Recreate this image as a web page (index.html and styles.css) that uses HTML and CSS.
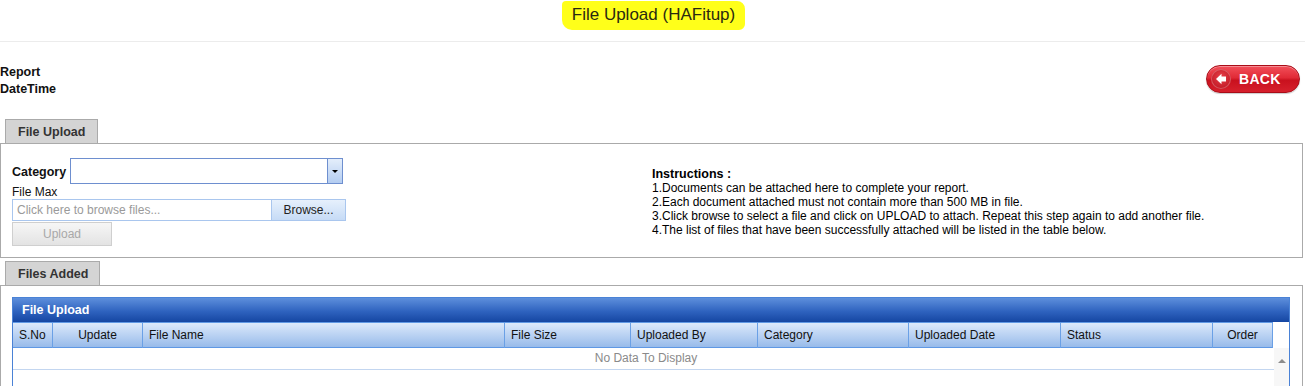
FILE: index.html
```html
<!DOCTYPE html>
<html>
<head>
<meta charset="utf-8">
<title>File Upload (HAFitup)</title>
<link rel="stylesheet" href="styles.css">
</head>
<body>
<header class="page-head">
  <span class="title-mark">File Upload (HAFitup)</span>
</header>

<section class="meta">
  <div class="meta-labels">
    <div>Report</div>
    <div>DateTime</div>
  </div>
  <button class="back-btn" type="button">
    <span class="back-circle">
      <svg width="14" height="14" viewBox="0 0 14 14"><path d="M2 7 L7.5 1.8 L7.5 4.6 L12 4.6 L12 9.4 L7.5 9.4 L7.5 12.2 Z" fill="#fff"/></svg>
    </span>
    <span class="back-text">BACK</span>
  </button>
</section>

<div class="tab tab-first">File Upload</div>
<section class="panel panel-upload">
  <div class="form-col">
    <div class="cat-row">
      <label class="cat-label">Category</label>
      <div class="select">
        <div class="select-field"></div>
        <div class="select-btn"><span class="caret"></span></div>
      </div>
    </div>
    <div class="file-max">File Max</div>
    <div class="file-row">
      <div class="file-field">Click here to browse files...</div>
      <div class="browse-btn">Browse...</div>
    </div>
    <div class="upload-btn">Upload</div>
  </div>
  <div class="instructions">
    <div class="ins-title">Instructions :</div>
    <div>1.Documents can be attached here to complete your report.</div>
    <div>2.Each document attached must not contain more than 500 MB in file.</div>
    <div>3.Click browse to select a file and click on UPLOAD to attach. Repeat this step again to add another file.</div>
    <div>4.The list of files that have been successfully attached will be listed in the table below.</div>
  </div>
</section>

<div class="tab tab-second">Files Added</div>
<section class="panel panel-files">
  <div class="grid">
    <div class="grid-caption">File Upload</div>
    <div class="grid-head-row">
      <div class="grid-head">
        <div class="hc c-left">S.No</div>
        <div class="hc c-center">Update</div>
        <div class="hc c-left">File Name</div>
        <div class="hc c-left">File Size</div>
        <div class="hc c-left">Uploaded By</div>
        <div class="hc c-left">Category</div>
        <div class="hc c-left">Uploaded Date</div>
        <div class="hc c-left">Status</div>
        <div class="hc c-center">Order</div>
      </div>
    </div>
    <div class="grid-body">
      <div class="rows">
        <div class="empty-row">No Data To Display</div>
      </div>
      <div class="vscroll"><span class="up-arrow"></span></div>
    </div>
  </div>
</section>
</body>
</html>
```

FILE: styles.css
```css
html, body {
  margin: 0;
  padding: 0;
  background: #fff;
}
body {
  font-family: "Liberation Sans", Arial, sans-serif;
  font-size: 12px;
  color: #111;
  overflow: hidden;
}

.page-head {
  border-bottom: 1px solid #ececec;
  display: flex;
  justify-content: center;
  align-items: flex-start;
  padding-top: 1px;
  box-sizing: border-box;
  height: 42px;
}
.title-mark {
  background: #ffff1a;
  color: #2a2a10;
  font-size: 17px;
  line-height: 20px;
  padding: 4px 10px 5px 10px;
  border-radius: 4px 8px 6px 10px;
  margin-left: 2px;
}

.meta {
  display: flex;
  justify-content: space-between;
  align-items: flex-start;
  padding: 22px 5px 0 0;
  box-sizing: border-box;
  height: 77px;
}
.meta-labels {
  font-weight: bold;
  font-size: 12.5px;
  line-height: 17px;
}
.back-btn {
  margin-top: 1px;
  width: 94px;
  height: 28px;
  border: 1px solid #a90d18;
  border-radius: 14px;
  background: linear-gradient(#f2505a 0%, #e12a36 45%, #c9111e 55%, #d6202c 100%);
  box-shadow: inset 0 1px 0 rgba(255,255,255,0.35), 0 1px 1px rgba(0,0,0,0.2);
  display: flex;
  align-items: center;
  padding: 0 0 0 4px;
  gap: 8px;
  cursor: pointer;
}
.back-circle {
  width: 20px;
  height: 20px;
  border-radius: 50%;
  background: radial-gradient(circle at 50% 40%, #e8404a, #b50d19);
  box-shadow: inset 0 0 0 1px rgba(255,255,255,0.25);
  display: flex;
  align-items: center;
  justify-content: center;
}
.back-text {
  color: #fff;
  font-family: "Liberation Sans", Arial, sans-serif;
  font-weight: bold;
  font-size: 14px;
  letter-spacing: 0.3px;
}

.tab {
  display: inline-block;
  margin-left: 5px;
  background: #d4d4d4;
  border: 1px solid #aaa;
  border-bottom: none;
  font-weight: bold;
  font-size: 12.5px;
  color: #333;
  height: 24px;
  line-height: 24px;
  box-sizing: border-box;
  padding: 0 0 0 12px;
  vertical-align: bottom;
}
.tab-first { width: 93px; }
.tab-second { width: 95px; margin-top: 3px; }

.panel {
  border: 1px solid #aaa;
  margin-right: 2px;
  box-sizing: border-box;
}
.panel-upload {
  height: 115px;
  display: flex;
  padding: 14px 0 0 11px;
}
.form-col {
  width: 640px;
}
.cat-row {
  display: flex;
  align-items: center;
  height: 26px;
}
.cat-label {
  width: 58px;
  font-weight: bold;
  font-size: 12.5px;
  padding-top: 2px;
}
.select {
  display: flex;
  width: 273px;
  height: 26px;
  border: 1px solid #6e8fcf;
  box-sizing: border-box;
}
.select-field {
  flex: 1;
  background: #fff;
}
.select-btn {
  width: 14px;
  border-left: 1px solid #6e8fcf;
  background: linear-gradient(#e4eefb, #b4cdf1);
  display: flex;
  align-items: center;
  justify-content: center;
}
.caret {
  width: 0;
  height: 0;
  border-left: 3px solid transparent;
  border-right: 3px solid transparent;
  border-top: 3px solid #000;
}
.file-max {
  line-height: 14px;
  height: 14px;
  padding-top: 1px;
}
.file-row {
  display: flex;
  height: 22px;
  width: 334px;
}
.file-field {
  width: 260px;
  border: 1px solid #a9c6ee;
  box-sizing: border-box;
  color: #9a9a9a;
  padding-left: 4px;
  line-height: 21px;
}
.browse-btn {
  flex: 1;
  border: 1px solid #a9c6ee;
  border-left: none;
  background: linear-gradient(#e6f0fc, #c6dbf6);
  text-align: center;
  line-height: 21px;
  color: #222;
}
.upload-btn {
  margin-top: 1px;
  width: 100px;
  height: 24px;
  box-sizing: border-box;
  border: 1px solid #cfcfcf;
  background: linear-gradient(#f6f6f6, #e3e3e3);
  color: #a8a8a8;
  text-align: center;
  line-height: 23px;
}
.instructions {
  margin-top: 9px;
  line-height: 14px;
  color: #000;
}
.ins-title {
  font-weight: bold;
  font-size: 12.5px;
}

.panel-files {
  height: 102px;
  padding: 11px 12px 0 11px;
}
.grid {
  border: 1px solid #4a82d6;
  border-bottom: none;
  height: 100%;
  box-sizing: border-box;
  display: flex;
  flex-direction: column;
}
.grid-caption {
  height: 24px;
  line-height: 25px;
  background: linear-gradient(#5d8fdc 0%, #2f63bf 55%, #1546a2 100%);
  color: #fff;
  font-weight: bold;
  font-size: 12.5px;
  padding-left: 9px;
}
.grid-head-row {
  display: flex;
  height: 26px;
}
.grid-head {
  display: grid;
  grid-template-columns: 40px 90px 362px 126px 127px 151px 152px 152px 60px;
  background: linear-gradient(#dce9fb, #98bbea);
  border-top: 1px solid #5f98e4;
  border-bottom: 1px solid #5f98e4;
  box-sizing: border-box;
}
.hc {
  border-right: 1px solid #6aa0e6;
  line-height: 25px;
  padding: 0 6px;
  color: #111;
  white-space: nowrap;
}
.c-left { text-align: left; }
.c-center { text-align: center; }
.grid-body {
  flex: 1;
  display: flex;
}
.rows {
  width: 1261px;
}
.empty-row {
  height: 21px;
  line-height: 21px;
  border-bottom: 1px solid #c3d6f0;
  text-align: center;
  color: #8a8a8a;
  padding-left: 5px;
}
.vscroll {
  flex: 1;
  background: #f7f7f7;
  display: flex;
  justify-content: center;
  padding-top: 11px;
}
.up-arrow {
  width: 0;
  height: 0;
  border-left: 4px solid transparent;
  border-right: 4px solid transparent;
  border-bottom: 4px solid #8c8c8c;
}
```
